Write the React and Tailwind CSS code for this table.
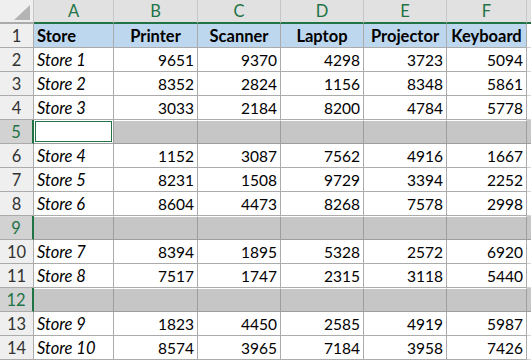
import React from 'react';

const cols = ['A', 'B', 'C', 'D', 'E', 'F'];
const widths = ['w-[80px]', 'w-[84px]', 'w-[83px]', 'w-[83px]', 'w-[83px]', 'w-[80px]'];
const heads = ['Store', 'Printer', 'Scanner', 'Laptop', 'Projector', 'Keyboard'];

const rows = [
  ['Store 1', 9651, 9370, 4298, 3723, 5094],
  ['Store 2', 8352, 2824, 1156, 8348, 5861],
  ['Store 3', 3033, 2184, 8200, 4784, 5778],
  null,
  ['Store 4', 1152, 3087, 7562, 4916, 1667],
  ['Store 5', 8231, 1508, 9729, 3394, 2252],
  ['Store 6', 8604, 4473, 8268, 7578, 2998],
  null,
  ['Store 7', 8394, 1895, 5328, 2572, 6920],
  ['Store 8', 7517, 1747, 2315, 3118, 5440],
  null,
  ['Store 9', 1823, 4450, 2585, 4919, 5987],
  ['Store 10', 8574, 3965, 7184, 3958, 7426],
];

const RowHead = ({ n, selected }) => (
  <div
    className={
      selected
        ? 'w-[34px] shrink-0 flex items-center justify-center pt-[1px] text-[16.5px] border-b border-b-[#ababab] border-r-2 border-r-[#217346] bg-[#d2d2d2] text-[#217346]'
        : 'w-[34px] shrink-0 flex items-center justify-center pt-[1px] text-[16.5px] border-b border-b-[#ababab] border-r border-r-[#ababab] bg-[#efefef] text-[#333]'
    }
  >
    {n}
  </div>
);

export default function App() {
  return (
    <div className="w-[531px] h-[362px] overflow-hidden bg-white text-[15.5px] text-black font-['Lato',sans-serif]">
      {/* column headers */}
      <div className="flex h-[24px]">
        <div className="w-[34px] shrink-0 relative bg-[#efefef] border-r border-r-[#c6c6c6] border-b-2 border-b-[#ababab]">
          <div className="absolute right-[3px] bottom-[2px] w-0 h-0 border-l-[16px] border-l-transparent border-b-[15px] border-b-[#b4b4b4]" />
        </div>
        {cols.map((c, i) => (
          <div
            key={c}
            className={`${widths[i]} shrink-0 flex items-center justify-center text-[16.5px] bg-[#e1e1e1] text-[#217346] border-r border-r-[#c6c6c6] border-b-2 border-b-[#217346]`}
          >
            {c}
          </div>
        ))}
        <div className="flex-1 bg-[#e1e1e1] border-b-2 border-b-[#217346]" />
      </div>

      {/* row 1 */}
      <div className="flex h-[24px]">
        <RowHead n={1} />
        {heads.map((h, i) => (
          <div
            key={h}
            className={`${widths[i]} shrink-0 flex items-end pb-[3px] px-[3px] leading-[16px] text-[16.5px] font-bold bg-[#bdd7ee] border-r border-b border-[#ababab] ${
              i === 0 ? 'justify-start' : 'justify-center'
            }`}
          >
            {h}
          </div>
        ))}
        <div className="flex-1 border-b border-[#d4d4d4]" />
      </div>

      {rows.map((r, idx) => {
        const n = idx + 2;
        if (!r) {
          return (
            <div key={n} className="flex h-[24px]">
              <RowHead n={n} selected />
              {cols.map((c, i) => (
                <div
                  key={c}
                  className={`${widths[i]} shrink-0 border-r border-b border-[#9e9e9e] ${
                    n === 5 && i === 0 ? 'bg-white p-px' : 'bg-[#c6c6c6] border-t border-t-white'
                  }`}
                >
                  {n === 5 && i === 0 && <div className="h-full w-full border border-[#217346]" />}
                </div>
              ))}
              <div className="flex-1 bg-[#c6c6c6] border-b border-[#9e9e9e]" />
            </div>
          );
        }
        return (
          <div key={n} className="flex h-[24px]">
            <RowHead n={n} />
            {r.map((v, i) => (
              <div
                key={i}
                className={`${widths[i]} shrink-0 flex items-end pb-[3px] px-[3px] leading-[16px] border-r border-b border-[#ababab] ${
                  i === 0 ? 'justify-start italic text-[16.5px]' : 'justify-end'
                }`}
              >
                {v}
              </div>
            ))}
            <div className="flex-1 border-b border-[#d4d4d4]" />
          </div>
        );
      })}
    </div>
  );
}
